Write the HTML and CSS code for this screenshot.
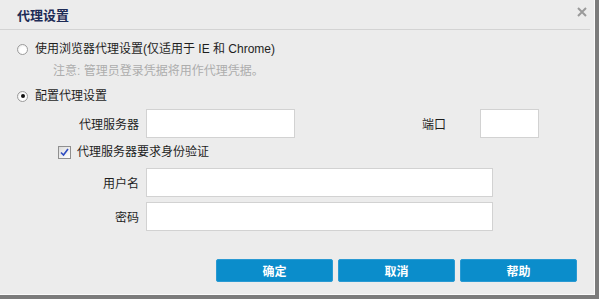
FILE: index.html
```html
<!DOCTYPE html>
<html lang="zh-CN">
<head>
    <meta charset="UTF-8">
    <title>代理设置</title>
    <link rel="stylesheet" href="styles.css">
</head>
<body>
    <div class="dialog">
        <div class="dialog-header">
            <h2 class="dialog-title">代理设置</h2>
            <span class="close-btn">
                <svg width="10" height="10" viewBox="0 0 10 10">
                    <path d="M1 1 L9 9 M9 1 L1 9" stroke="#9a9a9a" stroke-width="2" fill="none"/>
                </svg>
            </span>
        </div>

        <div class="dialog-body">
            <!-- browser proxy option -->
            <label class="radio-row">
                <span class="radio"></span>
                <span>使用浏览器代理设置(仅适用于 IE 和 Chrome)</span>
            </label>
            <p class="note">注意: 管理员登录凭据将用作代理凭据。</p>

            <!-- custom proxy option -->
            <label class="radio-row second">
                <span class="radio checked"></span>
                <span>配置代理设置</span>
            </label>

            <div class="field-row server-row">
                <span class="field-label">代理服务器</span>
                <input class="text-input server-input" type="text">
                <span class="port-label">端口</span>
                <input class="text-input port-input" type="text">
            </div>

            <label class="check-row">
                <span class="checkbox">
                    <svg width="9" height="9" viewBox="0 0 9 9">
                        <path d="M1 4.5 L3.5 7 L8 1" stroke="#2f4cc0" stroke-width="1.6" fill="none"/>
                    </svg>
                </span>
                <span>代理服务器要求身份验证</span>
            </label>

            <div class="field-row user-row">
                <span class="field-label">用户名</span>
                <input class="text-input wide-input" type="text">
            </div>
            <div class="field-row pass-row">
                <span class="field-label">密码</span>
                <input class="text-input wide-input" type="password">
            </div>

            <div class="button-bar">
                <button class="dlg-btn">确定</button>
                <button class="dlg-btn">取消</button>
                <button class="dlg-btn">帮助</button>
            </div>
        </div>
    </div>
</body>
</html>
```

FILE: styles.css
```css
body {
    margin: 0;
    background: #7b7b7b;
    font-family: "Liberation Sans", "Noto Sans CJK SC", sans-serif;
    font-size: 12px;
    color: #1e1e1e;
    height: 299px;
    overflow: hidden;
}

.dialog {
    width: 595px;
    height: 295px;
    box-sizing: border-box;
    background: #ececec;
    border-right: 1px solid #fafafa;
    border-bottom: 1px solid #fafafa;
}

.dialog-header {
    height: 29px;
    margin-right: 4px;
    border-bottom: 1px solid #d3d3d3;
    display: flex;
    align-items: center;
    justify-content: space-between;
    padding-left: 17px;
}

.dialog-title {
    margin: 0;
    font-size: 13px;
    font-weight: bold;
    color: #1d2b56;
    line-height: 16px;
    padding-top: 2px;
}

.close-btn {
    display: flex;
    margin-right: 3px;
    margin-top: -6px;
}

.dialog-body {
    padding-left: 17px;
}

.radio-row {
    display: flex;
    align-items: center;
    line-height: 16px;
    margin-top: 11px;
}

.radio-row.second {
    margin-top: 10px;
}

.radio {
    width: 9px;
    height: 9px;
    border-radius: 50%;
    border: 1px solid #9c9c9c;
    background: radial-gradient(circle at 60% 60%, #ffffff 40%, #e2e2e2 100%);
    margin-right: 7px;
    position: relative;
}

.radio.checked::after {
    content: "";
    position: absolute;
    left: 2.5px;
    top: 2.5px;
    width: 4px;
    height: 4px;
    border-radius: 50%;
    background: #111;
}

.note {
    margin: 7px 0 0 36px;
    line-height: 14px;
    color: #adadad;
}

.field-row {
    display: flex;
    align-items: center;
}

.server-row {
    margin-top: 5px;
}

.field-label {
    width: 122px;
    text-align: right;
    margin-right: 7px;
}

.text-input {
    height: 29px;
    box-sizing: border-box;
    border: 1px solid #d2d2d2;
    background: #fff;
    margin: 0;
    padding: 0 4px;
    font: inherit;
}

.server-input {
    width: 149px;
}

.port-label {
    width: 58px;
    margin-left: 127px;
}

.port-input {
    width: 59px;
}

.check-row {
    display: flex;
    align-items: center;
    line-height: 16px;
    margin: 6px 0 0 41px;
}

.checkbox {
    width: 11px;
    height: 11px;
    border: 1px solid #8f8f8f;
    background: linear-gradient(135deg, #dcdcdc, #ffffff);
    display: flex;
    align-items: center;
    justify-content: center;
    margin-right: 6px;
}

.user-row {
    margin-top: 8px;
}

.pass-row {
    margin-top: 5px;
}

.wide-input {
    width: 347px;
}

.button-bar {
    display: flex;
    justify-content: flex-end;
    gap: 5px;
    margin: 28px 17px 0 0;
}

.dlg-btn {
    width: 117px;
    height: 23px;
    border: 1px solid #2a9ad3;
    border-radius: 2px;
    background: #0b8dcb;
    color: #fff;
    font: inherit;
    font-weight: bold;
    font-size: 12px;
    padding: 0;
}
```
